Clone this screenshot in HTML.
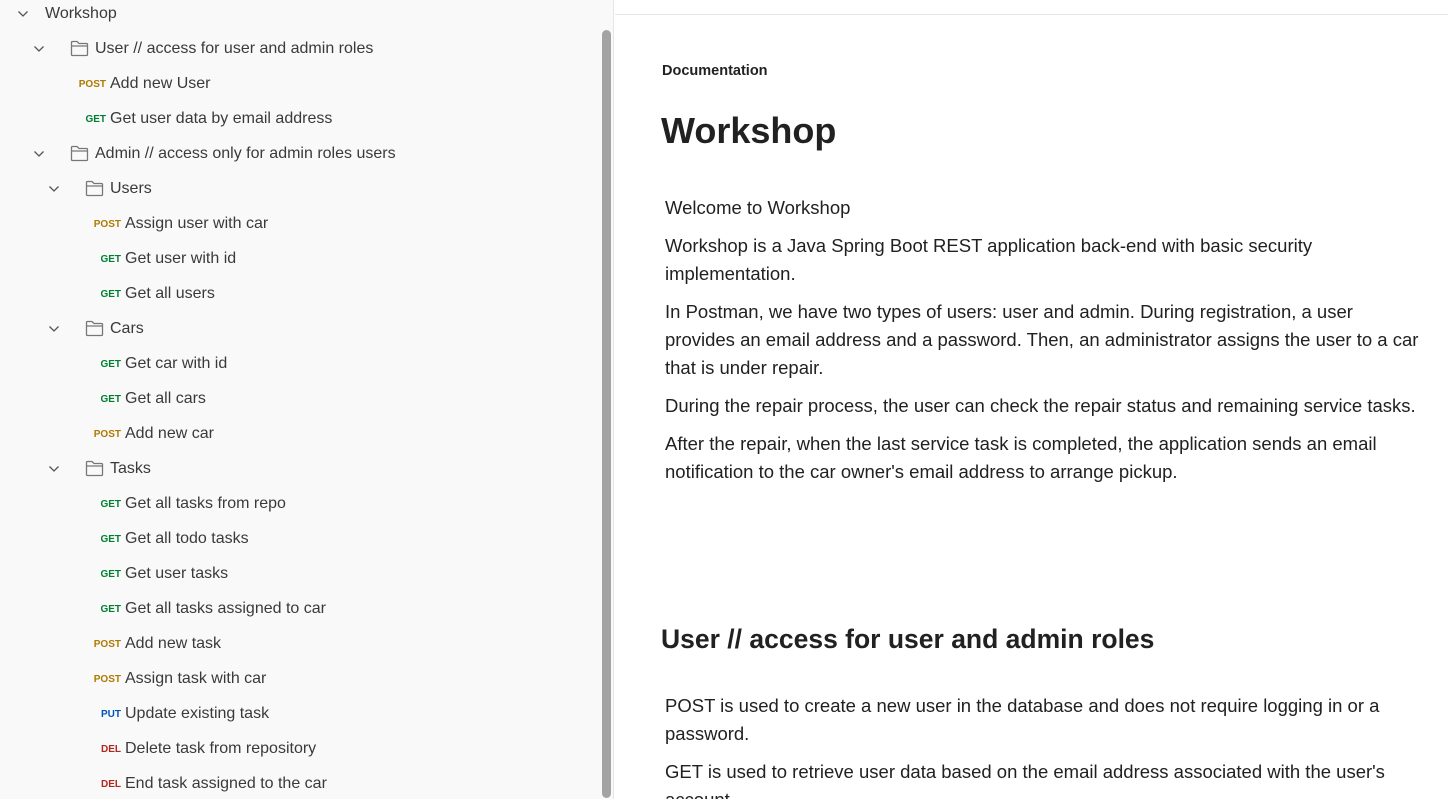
<!DOCTYPE html>
<html><head><meta charset="utf-8"><style>
*{margin:0;padding:0;box-sizing:border-box}
html,body{width:1448px;height:799px;overflow:hidden}
body{background:#fff;font-family:"Liberation Sans",sans-serif;color:#212121;position:relative}
#side{position:absolute;left:0;top:0;width:614px;height:799px;background:#f9f9f9;border-right:1px solid #e6e6e6}
.r{position:absolute;height:22px;line-height:22px;font-size:16px;color:#3a3a3a;white-space:nowrap}
.m{display:inline-block;text-align:right;font-size:10px;font-weight:bold;margin-right:4px;vertical-align:top;line-height:23px}
.post{color:#ad7a03}.get{color:#007f31}.put{color:#0053b8}.del{color:#b3261e}
.chev{position:absolute;width:12px;height:8px}
.fold{position:absolute;width:19px;height:17px}
#sb{position:absolute;left:602px;top:30px;width:9px;height:768px;background:#a3a3a3;border-radius:5px}
#main{position:absolute;left:615px;top:0;width:833px;height:799px}
#hdr{position:absolute;left:0;top:0;width:833px;height:15px;border-bottom:1px solid #e6e6e6}
.p{position:absolute;left:50px;font-size:18.5px;line-height:28px;color:#212121;white-space:nowrap}
</style></head><body>
<svg width="0" height="0" style="position:absolute"><defs>
<symbol id="cv" viewBox="0 0 12 8"><path d="M1.5 1.5 L6 6 L10.5 1.5" fill="none" stroke="#555" stroke-width="1.3"/></symbol>
<symbol id="fd" viewBox="0 0 19 17"><path d="M1.5 2.5 Q1.5 1.5 2.5 1.5 H7 L9 3.5 H16.5 Q17.5 3.5 17.5 4.5 V14.5 Q17.5 15.5 16.5 15.5 H2.5 Q1.5 15.5 1.5 14.5 Z M1.5 6 H17.5" fill="none" stroke="#777" stroke-width="1.3"/></symbol>
</defs></svg>
<div id="side">
<svg class="chev" style="left:17px;top:10px"><use href="#cv"/></svg><div class="r" style="left:45px;top:3px">Workshop</div>
<svg class="chev" style="left:33px;top:45px"><use href="#cv"/></svg><svg class="fold" style="left:70px;top:40px"><use href="#fd"/></svg><div class="r" style="left:95px;top:38px">User // access for user and admin roles</div>
<div class="r" style="left:70px;top:73px"><span class="m post" style="width:36px">POST</span>Add new User</div>
<div class="r" style="left:70px;top:108px"><span class="m get" style="width:36px">GET</span>Get user data by email address</div>
<svg class="chev" style="left:33px;top:150px"><use href="#cv"/></svg><svg class="fold" style="left:70px;top:145px"><use href="#fd"/></svg><div class="r" style="left:95px;top:143px">Admin // access only for admin roles users</div>
<svg class="chev" style="left:48px;top:185px"><use href="#cv"/></svg><svg class="fold" style="left:85px;top:180px"><use href="#fd"/></svg><div class="r" style="left:110px;top:178px">Users</div>
<div class="r" style="left:85px;top:213px"><span class="m post" style="width:36px">POST</span>Assign user with car</div>
<div class="r" style="left:85px;top:248px"><span class="m get" style="width:36px">GET</span>Get user with id</div>
<div class="r" style="left:85px;top:283px"><span class="m get" style="width:36px">GET</span>Get all users</div>
<svg class="chev" style="left:48px;top:325px"><use href="#cv"/></svg><svg class="fold" style="left:85px;top:320px"><use href="#fd"/></svg><div class="r" style="left:110px;top:318px">Cars</div>
<div class="r" style="left:85px;top:353px"><span class="m get" style="width:36px">GET</span>Get car with id</div>
<div class="r" style="left:85px;top:388px"><span class="m get" style="width:36px">GET</span>Get all cars</div>
<div class="r" style="left:85px;top:423px"><span class="m post" style="width:36px">POST</span>Add new car</div>
<svg class="chev" style="left:48px;top:465px"><use href="#cv"/></svg><svg class="fold" style="left:85px;top:460px"><use href="#fd"/></svg><div class="r" style="left:110px;top:458px">Tasks</div>
<div class="r" style="left:85px;top:493px"><span class="m get" style="width:36px">GET</span>Get all tasks from repo</div>
<div class="r" style="left:85px;top:528px"><span class="m get" style="width:36px">GET</span>Get all todo tasks</div>
<div class="r" style="left:85px;top:563px"><span class="m get" style="width:36px">GET</span>Get user tasks</div>
<div class="r" style="left:85px;top:598px"><span class="m get" style="width:36px">GET</span>Get all tasks assigned to car</div>
<div class="r" style="left:85px;top:633px"><span class="m post" style="width:36px">POST</span>Add new task</div>
<div class="r" style="left:85px;top:668px"><span class="m post" style="width:36px">POST</span>Assign task with car</div>
<div class="r" style="left:85px;top:703px"><span class="m put" style="width:36px">PUT</span>Update existing task</div>
<div class="r" style="left:85px;top:738px"><span class="m del" style="width:36px">DEL</span>Delete task from repository</div>
<div class="r" style="left:85px;top:773px"><span class="m del" style="width:36px">DEL</span>End task assigned to the car</div>
<div id="sb"></div>
</div>
<div id="main">
<div id="hdr"></div>
<div style="position:absolute;left:47px;top:63px;font-size:14.5px;font-weight:bold">Documentation</div>
<div style="position:absolute;left:46px;top:108px;font-size:36px;font-weight:bold;line-height:46px">Workshop</div>
<div class="p" style="top:194px">Welcome to Workshop</div>
<div class="p" style="top:232px">Workshop is a Java Spring Boot REST application back-end with basic security<br>implementation.</div>
<div class="p" style="top:298px">In Postman, we have two types of users: user and admin. During registration, a user<br>provides an email address and a password. Then, an administrator assigns the user to a car<br>that is under repair.</div>
<div class="p" style="top:392px">During the repair process, the user can check the repair status and remaining service tasks.</div>
<div class="p" style="top:430px">After the repair, when the last service task is completed, the application sends an email<br>notification to the car owner's email address to arrange pickup.</div>
<div style="position:absolute;left:46px;top:622px;font-size:26.5px;font-weight:bold;line-height:34px">User // access for user and admin roles</div>
<div class="p" style="top:692px">POST is used to create a new user in the database and does not require logging in or a<br>password.</div>
<div class="p" style="top:758px">GET is used to retrieve user data based on the email address associated with the user's<br>account.</div>
</div>
</body></html>
